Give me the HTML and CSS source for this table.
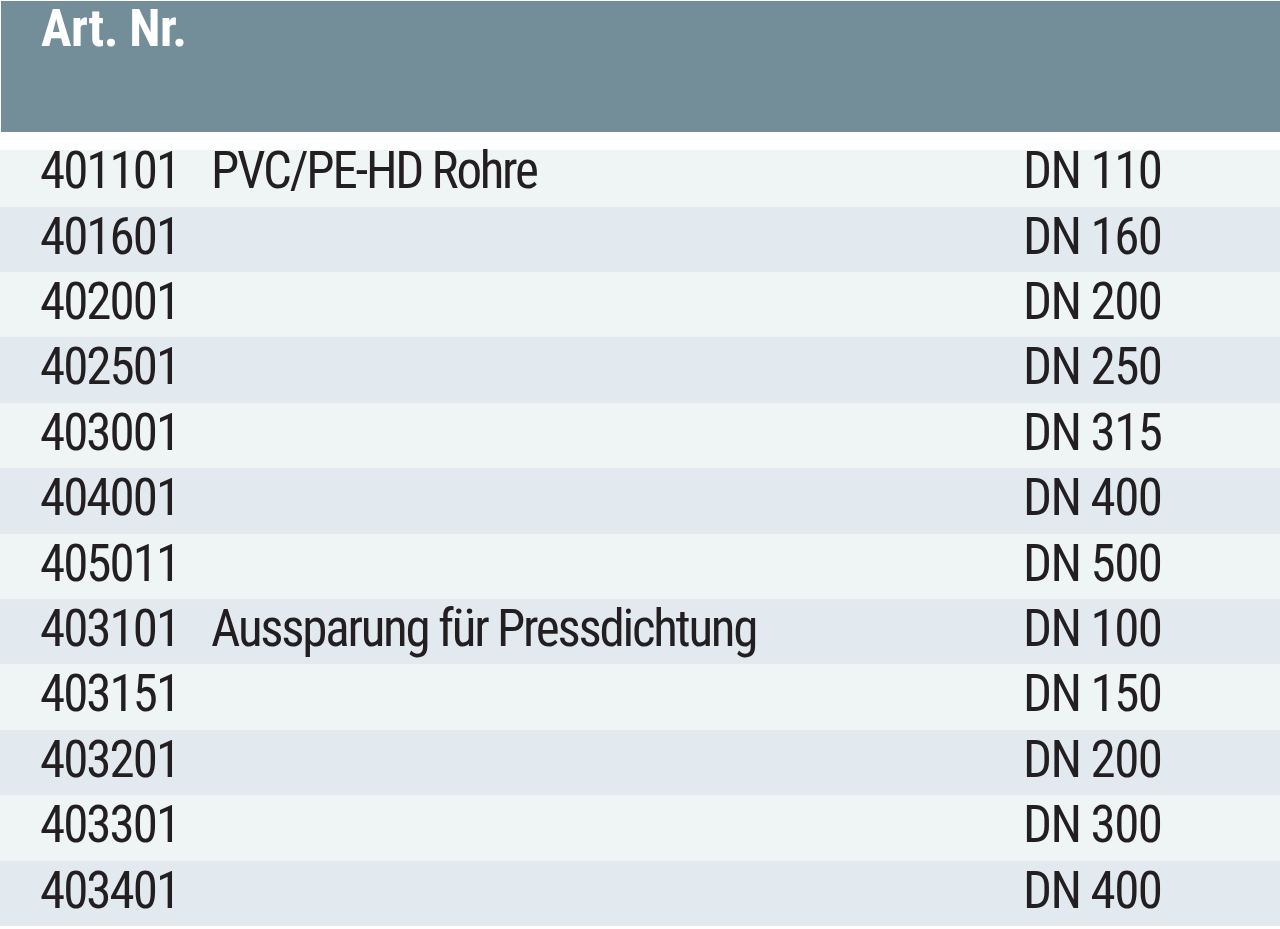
FILE: index.html
```html
<!DOCTYPE html>
<html lang="de">
<head>
<meta charset="utf-8">
<title>Art. Nr.</title>
<link rel="stylesheet" href="styles.css">
</head>
<body>
<div class="sheet">
  <div class="head">Art. Nr.</div>
  <div class="rows">
    <div class="row first light"><span class="nr">401101</span><span class="desc">PVC/PE-HD Rohre</span><span class="dn">DN 110</span></div>
    <div class="row dark"><span class="nr">401601</span><span class="desc"></span><span class="dn">DN 160</span></div>
    <div class="row light"><span class="nr">402001</span><span class="desc"></span><span class="dn">DN 200</span></div>
    <div class="row dark"><span class="nr">402501</span><span class="desc"></span><span class="dn">DN 250</span></div>
    <div class="row light"><span class="nr">403001</span><span class="desc"></span><span class="dn">DN 315</span></div>
    <div class="row dark"><span class="nr">404001</span><span class="desc"></span><span class="dn">DN 400</span></div>
    <div class="row light"><span class="nr">405011</span><span class="desc"></span><span class="dn">DN 500</span></div>
    <div class="row dark"><span class="nr">403101</span><span class="desc">Aussparung für Pressdichtung</span><span class="dn">DN 100</span></div>
    <div class="row light"><span class="nr">403151</span><span class="desc"></span><span class="dn">DN 150</span></div>
    <div class="row dark"><span class="nr">403201</span><span class="desc"></span><span class="dn">DN 200</span></div>
    <div class="row light"><span class="nr">403301</span><span class="desc"></span><span class="dn">DN 300</span></div>
    <div class="row dark"><span class="nr">403401</span><span class="desc"></span><span class="dn">DN 400</span></div>
  </div>
</div>
</body>
</html>
```
FILE: styles.css
```css
html, body {
  margin: 0;
  padding: 0;
  background: #ffffff;
}
.sheet {
  width: 1280px;
  height: 929px;
  overflow: hidden;
  font-family: "Roboto Condensed", "Roboto", "Liberation Sans", sans-serif;
  font-stretch: condensed;
  color: #231f20;
}
.head {
  margin: 1px 0 18px 1px;
  height: 131px;
  box-sizing: border-box;
  background: #738e99;
  color: #ffffff;
  font-weight: 700;
  font-size: 51px;
  letter-spacing: -0.5px;
  line-height: 49px;
  padding: 3px 0 0 40px;
}
.rows {
  display: flex;
  flex-direction: column;
}
.row {
  display: grid;
  grid-template-columns: 171px 812px 1fr;
  padding-left: 40px;
  height: 65.4px;
  box-sizing: border-box;
  font-size: 51px;
  line-height: 60px;
  letter-spacing: -2px;
  white-space: nowrap;
}
.row .desc {
  letter-spacing: -2.25px;
}
.row .dn {
  letter-spacing: -1.6px;
}
.row.first {
  height: 56.7px;
  line-height: 41.8px;
}
.light {
  background: #eff5f5;
}
.dark {
  background: #e2eaf0;
}
```
